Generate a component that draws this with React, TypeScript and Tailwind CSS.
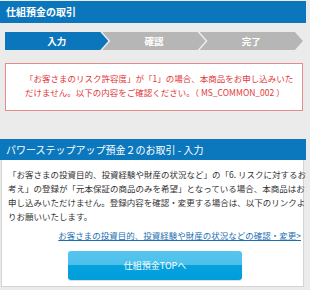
import React from "react";

const font = { fontFamily: '"Noto Sans CJK JP", "Noto Sans", sans-serif' };

export default function App() {
  return (
    <div
      className="w-[310px] h-[290px] bg-[#ebebeb] overflow-hidden"
      style={font}
    >
      <div className="w-[306px] pt-[1px]">
        {/* Header */}
        <div className="h-[22px] bg-[#0b76bb] flex items-center pl-[6px] text-white text-[10px] font-bold leading-none">
          仕組預金の取引
        </div>

        {/* Steps */}
        <div className="mt-[9px] ml-[5px] w-[298px] h-[18px] flex">
          <div className="w-[103.3px] h-full bg-[#0b76bb] text-white text-[9.5px] font-bold flex items-center justify-center [clip-path:polygon(0_0,calc(100%-8px)_0,100%_50%,calc(100%-8px)_100%,0_100%)]">
            入力
          </div>
          <div className="w-[103.3px] -ml-[6px] h-full bg-[#b6b6b6] text-white text-[9.5px] font-bold flex items-center justify-center [clip-path:polygon(0_0,calc(100%-8px)_0,100%_50%,calc(100%-8px)_100%,0_100%,8px_50%)]">
            確認
          </div>
          <div className="w-[103.3px] -ml-[6px] h-full bg-[#b6b6b6] text-white text-[9.5px] font-bold flex items-center justify-center [clip-path:polygon(0_0,calc(100%-8px)_0,100%_50%,calc(100%-8px)_100%,0_100%,8px_50%)]">
            完了
          </div>
        </div>

        {/* Error box */}
        <div className="mt-[13px] ml-[5px] w-[298px] h-[48px] bg-white border border-[#e68a8a] pl-[19px] pt-[7px] text-[8.5px] leading-[14px] text-[#e0383a]">
          <div className="whitespace-nowrap">
            「お客さまのリスク許容度」が「1」の場合、本商品をお申し込みいた
          </div>
          <div className="whitespace-nowrap">
            だけません。以下の内容をご確認ください。（ MS_COMMON_002 ）
          </div>
        </div>

        {/* Section header */}
        <div className="mt-[28px] h-[21px] bg-[#0b78be] flex items-center pl-[6px] text-white text-[10px] leading-none">
          パワーステップアップ預金２のお取引 - 入力
        </div>

        {/* Body */}
        <div className="ml-[1px] w-[303px] h-[127px] bg-white border border-t-0 border-[#d4d4d4] pt-[7px] pl-[6px] pr-[2px]">
          <div className="text-[8.5px] leading-[14px] text-[#333333]">
            <div className="whitespace-nowrap">
              「お客さまの投資目的、投資経験や財産の状況など」の「6. リスクに対するお
            </div>
            <div className="whitespace-nowrap">
              考え」の登録が「元本保証の商品のみを希望」となっている場合、本商品はお
            </div>
            <div className="whitespace-nowrap">
              申し込みいただけません。登録内容を確認・変更する場合は、以下のリンクよ
            </div>
            <div className="whitespace-nowrap">りお願いいたします。</div>
          </div>
          <div className="mt-[5px] flex justify-end text-[8.5px] leading-[14px]">
            <span className="text-[#1d6fb3] underline whitespace-nowrap">
              お客さまの投資目的、投資経験や財産の状況などの確認・変更&gt;
            </span>
          </div>
          <div className="mt-[9px] ml-[60px] w-[174px] h-[29px] rounded-[3px] overflow-hidden relative flex items-center justify-center text-white text-[9px] bg-[linear-gradient(to_bottom,#56c5ee_0%,#4cc0eb_50%,#05a2de_50%,#009ddb_100%)] shadow-[0_1px_1px_rgba(0,0,0,0.15)]">
            仕組預金TOPへ
          </div>
        </div>
      </div>
    </div>
  );
}
